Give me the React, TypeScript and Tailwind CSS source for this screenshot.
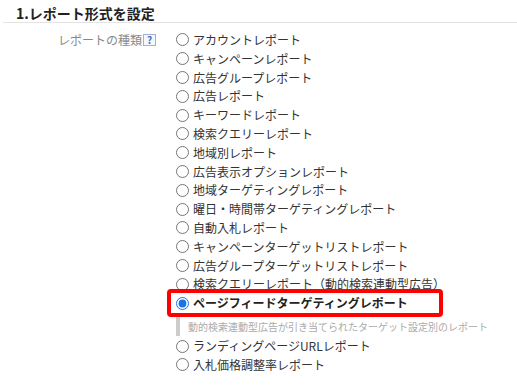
const reportTypes = [
  "アカウントレポート",
  "キャンペーンレポート",
  "広告グループレポート",
  "広告レポート",
  "キーワードレポート",
  "検索クエリーレポート",
  "地域別レポート",
  "広告表示オプションレポート",
  "地域ターゲティングレポート",
  "曜日・時間帯ターゲティングレポート",
  "自動入札レポート",
  "キャンペーンターゲットリストレポート",
  "広告グループターゲットリストレポート",
  "検索クエリーレポート（動的検索連動型広告）",
  "ページフィードターゲティングレポート",
  "ランディングページURLレポート",
  "入札価格調整率レポート",
];

const SELECTED = "ページフィードターゲティングレポート";

export default function App() {
  return (
    <div className="w-[517px] h-[386px] overflow-hidden bg-white text-[#333] font-['Noto_Sans_CJK_JP','Noto_Sans',sans-serif]">
      {/* 見出し */}
      <div className="pl-4 pt-[5px] h-[22px] text-[14px] font-bold leading-[16px] text-[#222]">
        1.レポート形式を設定
      </div>
      <div className="ml-[3px] border-t border-[#e3e3e3]" />

      <div className="flex pt-[7.6px]">
        {/* ラベル */}
        <div className="w-[176px] pr-[20px] flex justify-end items-start">
          <div className="h-[18.8px] flex items-center text-[12px] text-[#888]">
            レポートの種類
            <span className="ml-[1px] w-[13px] h-[12px] flex items-center justify-center border border-[#9fb1d8] bg-[#f4f7fd] text-[10px] font-bold leading-none text-[#4a6fc0]">
              ?
            </span>
          </div>
        </div>

        {/* ラジオボタン一覧 */}
        <div className="flex flex-col">
          {reportTypes.map((name) => {
            const selected = name === SELECTED;
            return (
              <div key={name}>
                <label className="relative h-[18.8px] flex items-center text-[12px] whitespace-nowrap">
                  <input
                    type="radio"
                    name="reportType"
                    defaultChecked={selected}
                    className="m-0 mr-[4px] w-[13px] h-[13px] accent-[#1a73e8]"
                  />
                  <span className={selected ? "font-bold text-[#222]" : ""}>
                    {name}
                  </span>
                  {selected && (
                    <span className="absolute left-[-9px] top-[-4.6px] w-[276px] h-[28px] border-4 border-[#f00] rounded-[4px]" />
                  )}
                </label>
                {selected && (
                  <div className="h-[24.2px] pt-[4px] flex items-start">
                    <div className="w-[4px] h-[19px] bg-[#ccc] mr-[8px]" />
                    <span className="h-[19px] flex items-center text-[10px] text-[#aaa] whitespace-nowrap">
                      動的検索連動型広告が引き当てられたターゲット設定別のレポート
                    </span>
                  </div>
                )}
              </div>
            );
          })}
        </div>
      </div>
    </div>
  );
}
